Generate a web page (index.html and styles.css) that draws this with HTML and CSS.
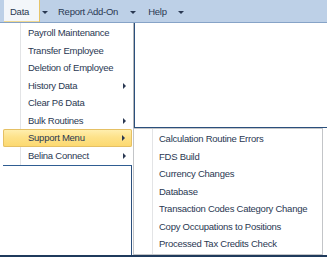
FILE: index.html
```html
<!DOCTYPE html>
<html lang="en">
<head>
    <meta charset="UTF-8">
    <meta name="viewport" content="width=device-width, initial-scale=1.0">
    <title>Menu</title>
    <link rel="stylesheet" href="styles.css">
</head>
<body>
    <div class="menubar">
        <div class="menu-item menu-item-open">Data</div>
        <div class="caret-box caret-first"><span class="caret"></span></div>
        <div class="menu-item menu-report">Report Add-On</div>
        <div class="caret-box"><span class="caret"></span></div>
        <div class="menu-item menu-help">Help</div>
        <div class="caret-box"><span class="caret"></span></div>
    </div>

    <div class="workspace">
        <div class="pane-top"></div>
        <div class="pane-bottom"></div>

        <div class="dropdown main-menu">
            <div class="dropdown-item">Payroll Maintenance</div>
            <div class="dropdown-item">Transfer Employee</div>
            <div class="dropdown-item">Deletion of Employee</div>
            <div class="dropdown-item has-sub">History Data</div>
            <div class="dropdown-item">Clear P6 Data</div>
            <div class="dropdown-item has-sub">Bulk Routines</div>
            <div class="dropdown-item has-sub selected">Support Menu</div>
            <div class="dropdown-item has-sub">Belina Connect</div>
        </div>

        <div class="dropdown sub-menu">
            <div class="dropdown-item">Calculation Routine Errors</div>
            <div class="dropdown-item">FDS Build</div>
            <div class="dropdown-item">Currency Changes</div>
            <div class="dropdown-item">Database</div>
            <div class="dropdown-item">Transaction Codes Category Change</div>
            <div class="dropdown-item">Copy Occupations to Positions</div>
            <div class="dropdown-item">Processed Tax Credits Check</div>
        </div>
    </div>
</body>
</html>
```

FILE: styles.css
```css
body {
    margin: 0;
    background: #fff;
    font-family: "Liberation Sans", Arial, sans-serif;
    font-size: 9.5px;
    letter-spacing: -0.25px;
    color: #2a3852;
    overflow: hidden;
}
.menubar {
    display: flex;
    height: 22px;
    padding-left: 4px;
    background: #bdd0e7;
    border-bottom: 1px solid #86a3c7;
}
.menu-item {
    line-height: 24px;
    white-space: nowrap;
}
.menu-item-open {
    width: 29px;
    padding-left: 6px;
    background: #f3f6fa;
    border-right: 1px solid #e6c469;
    box-shadow: inset 0 -1px 0 #f0d890;
}
.menu-report {
    margin-left: 9px;
}
.menu-help {
    margin-left: 11px;
}
.caret-box {
    width: 9px;
    margin-left: 10px;
    display: flex;
    align-items: center;
    justify-content: center;
    padding-top: 3px;
}
.caret-first {
    margin-left: 0;
}
.caret {
    width: 0;
    height: 0;
    border-top: 3px solid #2a3852;
    border-left: 3px solid transparent;
    border-right: 3px solid transparent;
}
.workspace {
    position: relative;
    height: 232px;
    border-bottom: 2px solid #1f3a5c;
}
.pane-top {
    margin-left: 134px;
    height: 104px;
    border-left: 1px solid #2a4f7c;
    border-bottom: 1px solid #2a4f7c;
}
.pane-bottom {
    margin-top: 37px;
    margin-left: 3px;
    width: 128px;
    height: 89px;
    border-top: 1px solid #2f5d92;
    border-right: 1px solid #2a4f7c;
}
.dropdown {
    position: absolute;
    padding: 1px 0;
    --margin: 17px;
    background: linear-gradient(to right, #fff 0 var(--margin), #e3e4e6 var(--margin) calc(var(--margin) + 1px), #fff calc(var(--margin) + 1px));
}
.main-menu {
    left: 3px;
    top: 0;
    width: 130px;
    border-right: 1px solid #b3b5b8;
}
.sub-menu {
    left: 133px;
    top: 105px;
    width: 188px;
    border: 1px solid #c3c5c8;
    --margin: 18px;
}
.dropdown-item {
    position: relative;
    height: 17.5px;
    line-height: 17.5px;
    padding-left: 25px;
    white-space: nowrap;
}
.has-sub::after {
    content: "";
    position: absolute;
    right: 7px;
    top: 6px;
    border-left: 3px solid #2a3852;
    border-top: 3px solid transparent;
    border-bottom: 3px solid transparent;
}
.selected {
    margin-right: 1px;
    background: linear-gradient(#fff0b3, #fde28a 45%, #fcd86e);
    box-shadow: inset 0 0 0 1px #e5c064;
    border-radius: 2px;
}
```
